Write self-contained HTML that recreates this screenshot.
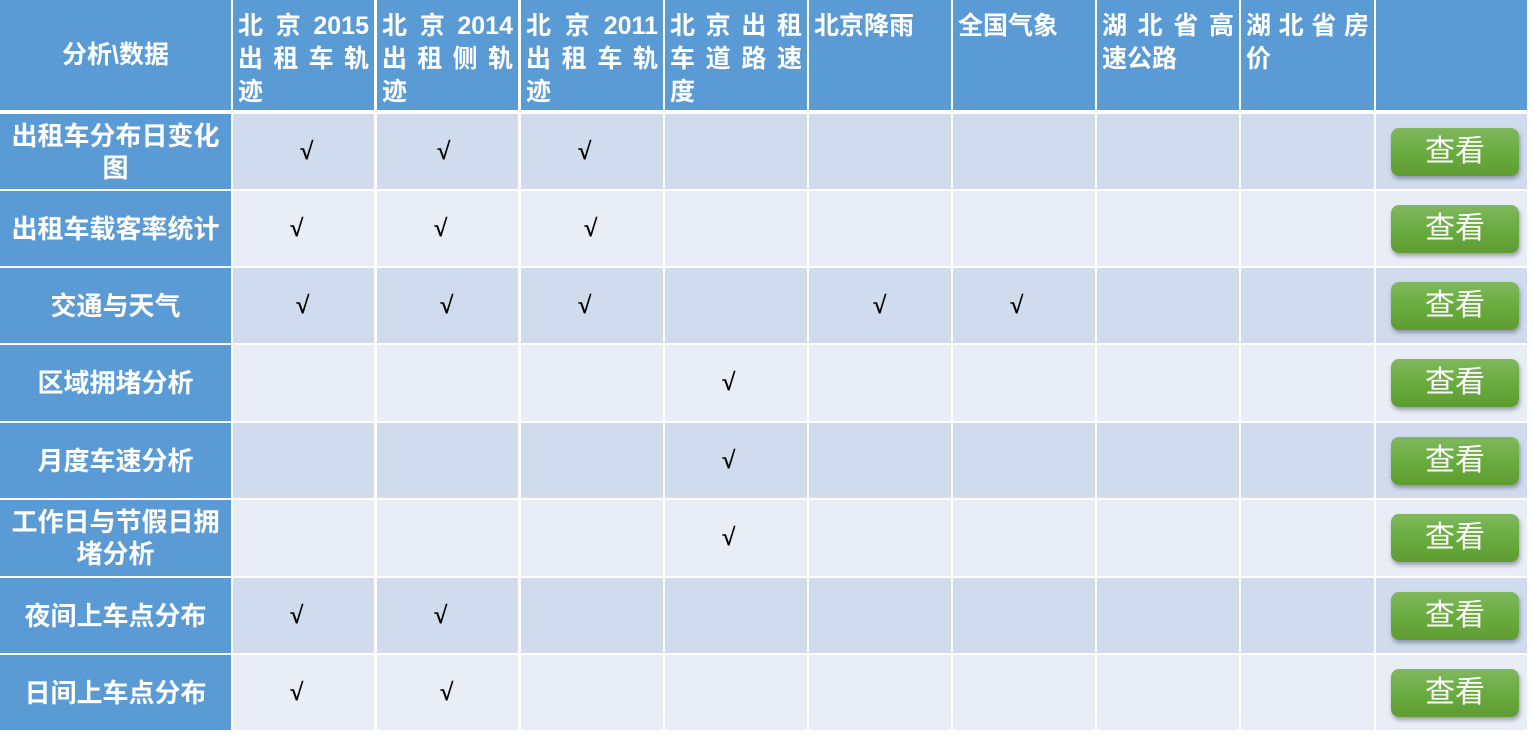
<!DOCTYPE html><html><head><meta charset="utf-8"><style>
body{margin:0;width:1533px;height:738px;background:#fff;position:relative;overflow:hidden;font-family:"Liberation Sans","Noto Sans CJK SC",sans-serif}
.c{position:absolute;box-sizing:border-box}
.h{background:#5b9bd5;color:#fff;font-weight:bold;font-size:25px;line-height:33px;padding:10px 5px 0 5px}
.l{display:flex;justify-content:space-between}
.f{background:#5b9bd5;color:#fff;font-weight:bold;font-size:26px;line-height:32px;display:flex;align-items:center;justify-content:center;text-align:center}
.a{background:#d0dcee}.b{background:#e9edf6}
.k{position:absolute;font-size:24px;font-weight:bold;color:#000;font-family:"Liberation Serif",serif;-webkit-text-stroke:0.6px #000}
.btn{position:absolute;left:1391px;width:128px;height:48px;border-radius:8px;background:linear-gradient(#80b85e,#6aac3f 50%,#5e9c31);color:#fff;font-size:30px;text-align:center;line-height:48px;box-shadow:1px 3px 4px rgba(60,60,80,.45)}
</style></head><body>
<div class="c f" style="left:0;top:0;width:231px;height:110px;font-size:25px">分析\数据</div>
<div class="c h" style="left:233px;top:0;width:141px;height:110px"><div class="l"><span>北</span><span>京</span><span>2015</span></div><div class="l"><span>出</span><span>租</span><span>车</span><span>轨</span></div><div>迹</div></div>
<div class="c h" style="left:377px;top:0;width:141px;height:110px"><div class="l"><span>北</span><span>京</span><span>2014</span></div><div class="l"><span>出</span><span>租</span><span>侧</span><span>轨</span></div><div>迹</div></div>
<div class="c h" style="left:521px;top:0;width:142px;height:110px"><div class="l"><span>北</span><span>京</span><span>2011</span></div><div class="l"><span>出</span><span>租</span><span>车</span><span>轨</span></div><div>迹</div></div>
<div class="c h" style="left:665px;top:0;width:142px;height:110px"><div class="l"><span>北</span><span>京</span><span>出</span><span>租</span></div><div class="l"><span>车</span><span>道</span><span>路</span><span>速</span></div><div>度</div></div>
<div class="c h" style="left:809px;top:0;width:142px;height:110px">北京降雨</div>
<div class="c h" style="left:953px;top:0;width:142px;height:110px">全国气象</div>
<div class="c h" style="left:1097px;top:0;width:142px;height:110px"><div class="l"><span>湖</span><span>北</span><span>省</span><span>高</span></div><div>速公路</div></div>
<div class="c h" style="left:1241px;top:0;width:133px;height:110px"><div class="l"><span>湖</span><span>北</span><span>省</span><span>房</span></div><div>价</div></div>
<div class="c h" style="left:1376px;top:0;width:151px;height:110px"></div>

<div id="rows"></div>
<script>
var tops=[114,191,268,345,423,500,578,655],names=["出租车分布日变化<br>图","出租车载客率统计","交通与天气","区域拥堵分析","月度车速分析","工作日与节假日拥<br>堵分析","夜间上车点分布","日间上车点分布"];
var cols=[[233,141],[377,141],[521,142],[665,142],[809,142],[953,142],[1097,142],[1241,133],[1376,151]];
var ks=[[307,444,585],[297,441,591],[303,447,585,880,1017],[729],[729],[729],[297,441],[297,447]];
var h='';
tops.forEach(function(t,i){var hh=(i==7?75:(tops[i+1]-t-2));var cl=i%2?'b':'a';
h+='<div class="c f" style="left:0;top:'+t+'px;width:231px;height:'+hh+'px">'+names[i]+'</div>';
cols.forEach(function(c){h+='<div class="c '+cl+'" style="left:'+c[0]+'px;top:'+t+'px;width:'+c[1]+'px;height:'+hh+'px"></div>';});
ks[i].forEach(function(x){h+='<div class="k" style="left:'+(x-7)+'px;top:'+(t+hh/2-13)+'px">√</div>';});
h+='<div class="btn" style="top:'+(t+hh/2-24)+'px">查看</div>';});
document.getElementById('rows').innerHTML=h;
</script>
</body></html>
